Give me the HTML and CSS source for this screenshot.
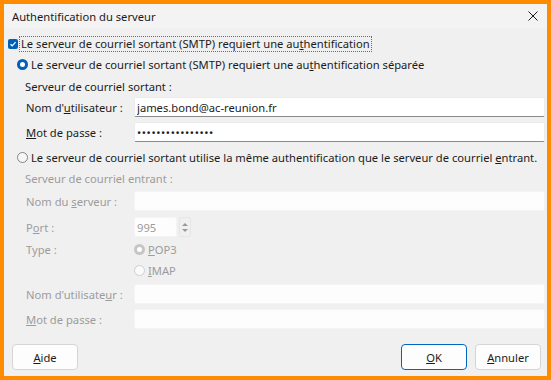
FILE: index.html
```html
<!DOCTYPE html>
<html>
<head>
  <title>Authentification du serveur</title>
  <link rel="stylesheet" href="styles.css">
</head>
<body>
  <div class="window">
    <div class="titlebar">
      <span class="title">Authentification du serveur</span>
      <svg class="close" width="10" height="10" viewBox="0 0 10 10">
        <path d="M0.5 0.5 L9.5 9.5 M9.5 0.5 L0.5 9.5" stroke="#1a1a1a" stroke-width="1" fill="none"/>
      </svg>
    </div>
    <div class="content">
      <div class="row row-check">
        <span class="checkbox">
          <svg width="10" height="10" viewBox="0 0 10 10">
            <path d="M2.5 5.2 L4.2 6.8 L7.6 3.2" stroke="#fff" stroke-width="1.2" fill="none"/>
          </svg>
        </span>
        <span class="focus">Le serveur de courriel sortant (SMTP) requiert une au<u>t</u>hentification</span>
      </div>
      <div class="row row-radio">
        <span class="radio checked"></span>
        <span>Le serveur de courriel sortant (SMTP) requiert une au<u>t</u>hentification séparée</span>
      </div>
      <div class="row caption">Serveur de courriel sortant :</div>
      <div class="row field">
        <label>Nom d'<u>u</u>tilisateur :</label>
        <input type="text" value="james.bond@ac-reunion.fr">
      </div>
      <div class="row field">
        <label><u>M</u>ot de passe :</label>
        <input type="password" value="abcdefghijklmnop">
      </div>
      <div class="row row-radio row-radio2">
        <span class="radio"></span>
        <span>Le serveur de courriel sortant utilise la même authentification que le serveur de courriel <u>e</u>ntrant.</span>
      </div>
      <div class="disabled">
        <div class="row caption caption2">Serveur de courriel entrant :</div>
        <div class="row field field-tall">
          <label>Nom du <u>s</u>erveur :</label>
          <input type="text" disabled>
        </div>
        <div class="row field field-port">
          <label>P<u>o</u>rt :</label>
          <input class="port" type="text" value="995" disabled>
          <span class="spin">
            <span class="arrow up"></span>
            <span class="arrow down"></span>
          </span>
        </div>
        <div class="row field field-type">
          <label>Type :</label>
          <span class="radio dis checked"></span>
          <span><u>P</u>OP3</span>
        </div>
        <div class="row field field-imap">
          <label></label>
          <span class="radio dis"></span>
          <span><u>I</u>MAP</span>
        </div>
        <div class="row field">
          <label>Nom d'utilisate<u>u</u>r :</label>
          <input type="text" disabled>
        </div>
        <div class="row field">
          <label><u>M</u>ot de passe :</label>
          <input type="password" disabled>
        </div>
      </div>
    </div>
    <div class="footer">
      <button class="btn"><u>A</u>ide</button>
      <span class="spacer"></span>
      <button class="btn default"><u>O</u>K</button>
      <button class="btn"><u>A</u>nnuler</button>
    </div>
  </div>
</body>
</html>
```

FILE: styles.css
```css
body {
  margin: 0;
  font-family: "Noto Sans", sans-serif;
  font-size: 11.2px;
  color: #1b1b1b;
}
.window {
  width: 551px;
  height: 380px;
  box-sizing: border-box;
  border: 4px solid #ff8c00;
  background-color: #f0f0f0;
  display: flex;
  flex-direction: column;
}
.titlebar {
  height: 24px;
  background-color: #f3f3f3;
  display: flex;
  align-items: center;
  padding: 0 9px 0 8px;
}
.titlebar .title {
  flex: 1;
  color: #1a1a1a;
}
.content {
  padding: 6px 2px 0 4px;
}
.row {
  display: flex;
  align-items: center;
  height: 22px;
  white-space: nowrap;
}
.row-check {
  height: 19px;
}
.checkbox {
  width: 10px;
  height: 10px;
  border-radius: 2px;
  background-color: #005fb8;
  display: flex;
  margin-right: 1px;
}
.focus {
  border: 1px dotted #6b6b6b;
  padding: 0 1px;
  line-height: 14px;
}
.row-radio {
  padding-left: 9px;
}
.row-radio2 {
  height: 21px;
}
.radio {
  box-sizing: border-box;
  width: 11px;
  height: 11px;
  border-radius: 50%;
  border: 1px solid #858585;
  background-color: #f7f7f7;
  margin-right: 3px;
  flex-shrink: 0;
}
.radio.checked {
  border: 3px solid #005fb8;
  background-color: #fff;
}
.caption {
  padding-left: 17px;
}
.caption2 {
  height: 20px;
  margin-bottom: 3px;
}
.field {
  height: 20px;
  margin-bottom: 5px;
  padding-left: 18px;
}
.field-tall {
  margin-bottom: 6px;
}
.field-port {
  margin-bottom: 1px;
}
.field-type {
  height: 22px;
  margin-bottom: 0;
}
.field-imap {
  margin-bottom: 4px;
}
.field label {
  width: 108px;
  flex-shrink: 0;
}
.field input {
  flex: 1;
  min-width: 0;
  height: 20px;
  box-sizing: border-box;
  border: 1px solid #ececec;
  border-bottom-color: #8a8a8a;
  border-radius: 2px;
  background-color: #fff;
  font-family: inherit;
  font-size: 11.2px;
  color: #1b1b1b;
  padding: 0 2px;
  margin: 0;
  outline: none;
}
.field input[type="password"] {
  letter-spacing: 0.6px;
}
.disabled {
  color: #9c9c9c;
}
.disabled .field input {
  border-color: #f4f4f4;
  background-color: #fdfdfd;
  color: #9c9c9c;
}
.disabled .field input.port {
  flex: 0 0 43px;
  width: 43px;
}
.spin {
  display: flex;
  flex-direction: column;
  justify-content: center;
  align-items: center;
  gap: 3px;
  width: 12px;
  height: 20px;
  margin-left: 2px;
  box-sizing: border-box;
  border: 1px solid #e6e6e6;
  border-radius: 2px;
}
.arrow {
  width: 0;
  height: 0;
  border-left: 3px solid transparent;
  border-right: 3px solid transparent;
}
.arrow.up {
  border-bottom: 3px solid #9a9a9a;
}
.arrow.down {
  border-top: 3px solid #9a9a9a;
}
.radio.dis {
  border-color: #cfcfcf;
  background-color: #fafafa;
}
.radio.dis.checked {
  border: 3px solid #c6c6c6;
  background-color: #fff;
}
.footer {
  margin-top: auto;
  display: flex;
  align-items: center;
  padding: 0 6px 6px 8px;
  gap: 8px;
}
.spacer {
  flex: 1;
}
.btn {
  width: 66px;
  height: 26px;
  box-sizing: border-box;
  background-color: #fdfdfd;
  border: 1px solid #d5d5d5;
  border-radius: 4px;
  font-family: inherit;
  font-size: 11.2px;
  color: #1b1b1b;
  padding: 0;
}
.btn.default {
  border-color: #0067c0;
}
```
